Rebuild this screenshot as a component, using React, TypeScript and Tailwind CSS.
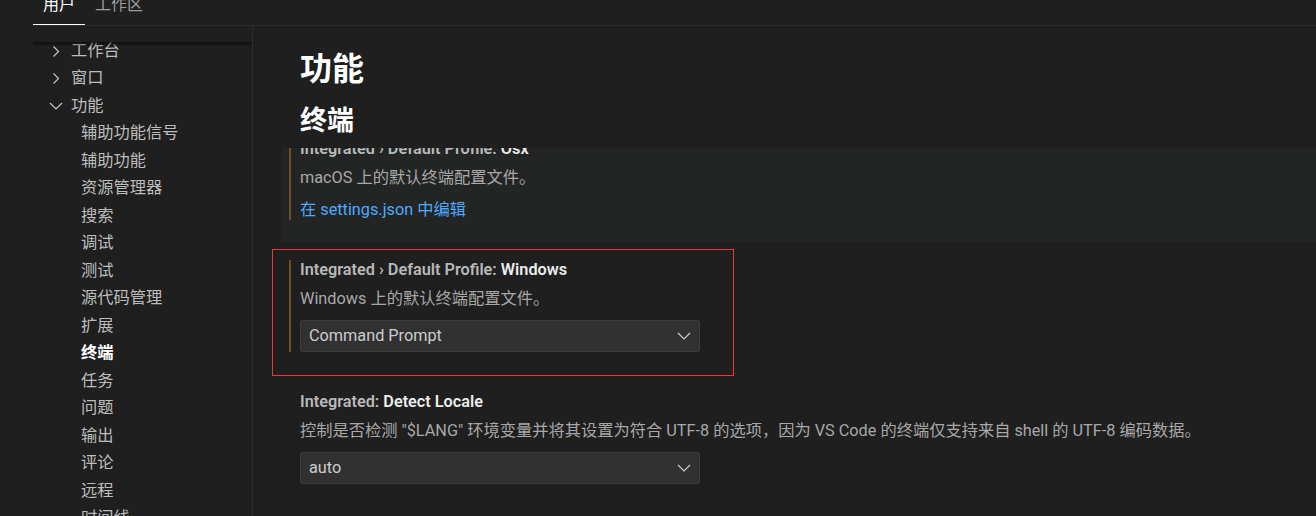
import React from 'react';

type TocItem = {
  label: string;
  level: 0 | 1;
  expanded?: boolean;
  active?: boolean;
};

const tocItems: TocItem[] = [
  { label: '工作台', level: 0, expanded: false },
  { label: '窗口', level: 0, expanded: false },
  { label: '功能', level: 0, expanded: true },
  { label: '辅助功能信号', level: 1 },
  { label: '辅助功能', level: 1 },
  { label: '资源管理器', level: 1 },
  { label: '搜索', level: 1 },
  { label: '调试', level: 1 },
  { label: '测试', level: 1 },
  { label: '源代码管理', level: 1 },
  { label: '扩展', level: 1 },
  { label: '终端', level: 1, active: true },
  { label: '任务', level: 1 },
  { label: '问题', level: 1 },
  { label: '输出', level: 1 },
  { label: '评论', level: 1 },
  { label: '远程', level: 1 },
  { label: '时间线', level: 1 },
];

const ChevronRight = () => (
  <svg width="16" height="16" viewBox="0 0 16 16" fill="none">
    <path d="M5.5 3.5L10.5 8.5L5.5 13.5" stroke="#c5c5c5" strokeWidth="1.2" />
  </svg>
);

const ChevronDown = ({ color = '#c5c5c5' }: { color?: string }) => (
  <svg width="16" height="16" viewBox="0 0 16 16" fill="none">
    <path d="M2 5L8 11L14 5" stroke={color} strokeWidth="1.2" />
  </svg>
);

// Settings tree on the left
const Toc = () => (
  <div className="relative w-[220px] flex-none border-r border-[#2b2b2b] pt-[11px] overflow-hidden">
    {/* scroll shadow */}
    <div className="absolute left-0 right-0 top-[16px] h-[5px] bg-gradient-to-b from-black/50 to-transparent" />
    {tocItems.map((item) => (
      <div
        key={item.label}
        className={
          'flex items-center h-[27.5px] text-[16.25px] ' +
          (item.level === 0 ? 'pl-[15px]' : 'pl-[48px]')
        }
      >
        {item.level === 0 && (
          <span className="flex w-4 h-4 mr-[7px]">
            {item.expanded ? <ChevronDown /> : <ChevronRight />}
          </span>
        )}
        <span
          className={
            item.active ? 'text-white font-semibold' : 'text-[#bdbdbd]'
          }
        >
          {item.label}
        </span>
      </div>
    ))}
  </div>
);

const Select = ({ value }: { value: string }) => (
  <div className="flex items-center justify-between w-[400px] h-[32px] bg-[#313131] border border-[#3c3c3c] rounded-[2px] pl-[8px] pr-[7px]">
    <span className="text-[16.25px] text-[#cccccc]">{value}</span>
    <ChevronDown color="#cccccc" />
  </div>
);

type SettingProps = {
  category: string;
  name: string;
  modified?: boolean;
  hovered?: boolean;
  outlined?: boolean;
  children: React.ReactNode;
};

const SettingItem = ({ category, name, modified, hovered, outlined, children }: SettingProps) => (
  <div className={'relative pl-[7px] pt-[18px] pb-[22px] ' + (hovered ? 'bg-[#232524]' : '')}>
    {outlined && (
      <div className="absolute left-[-10px] top-[7px] w-[462px] h-[127px] border border-[#e8383a]" />
    )}
    <div
      className={
        'pl-[9px] border-l-2 ' + (modified ? 'border-[#6e5221]' : 'border-transparent')
      }
    >
      <div className="h-[18px] leading-[20px] text-[16.25px] font-semibold whitespace-nowrap">
        <span className="text-[#b9b9b9]">{category}</span>{' '}
        <span className="text-[#ececec]">{name}</span>
      </div>
      {children}
    </div>
  </div>
);

const Description = ({ text }: { text: string }) => (
  <div className="mt-[11px] h-[20px] leading-[20px] text-[16.25px] text-[#a8a8a8] whitespace-nowrap">
    {text}
  </div>
);

export default function App() {
  return (
    <div className="w-[1316px] h-[516px] bg-[#1f1f1f] overflow-hidden flex flex-col pl-[33px] font-['Roboto','Noto_Sans_CJK_SC',sans-serif]">
      {/* scope tabs */}
      <div className="flex h-[26px] flex-none border-b border-[#2b2b2b]">
        <div className="px-[10px] h-[25px] border-b border-white">
          <div className="-mt-[3px] leading-[16px] text-[16px] text-white">用户</div>
        </div>
        <div className="px-[10px] h-[25px]">
          <div className="-mt-[3px] leading-[16px] text-[16px] text-[#9d9d9d]">工作区</div>
        </div>
      </div>

      <div className="flex flex-1 min-h-0">
        <Toc />

        <div className="flex flex-col flex-1 min-w-0">
          {/* sticky group header */}
          <div className="flex-none h-[122px] pt-[23px] pl-[47px] text-white font-bold">
            <div className="text-[32px] leading-[40px]">功能</div>
            <div className="mt-[15px] text-[27px] leading-[34px]">终端</div>
          </div>

          {/* scrolled settings list */}
          <div className="flex-1 min-h-0 overflow-hidden pl-[29px]">
            <div className="-mt-[27px]">
              <SettingItem category="Integrated › Default Profile:" name="Osx" modified hovered>
                <Description text="macOS 上的默认终端配置文件。" />
                <div className="mt-[12px] h-[20px] leading-[20px] text-[16.25px] text-[#4daafc]">
                  在 settings.json 中编辑
                </div>
              </SettingItem>

              <div className="w-[452px]">
                <SettingItem category="Integrated › Default Profile:" name="Windows" modified outlined>
                  <Description text="Windows 上的默认终端配置文件。" />
                  <div className="mt-[11px]">
                    <Select value="Command Prompt" />
                  </div>
                </SettingItem>
              </div>

              <SettingItem category="Integrated:" name="Detect Locale">
                <Description text='控制是否检测 "$LANG" 环境变量并将其设置为符合 UTF-8 的选项，因为 VS Code 的终端仅支持来自 shell 的 UTF-8 编码数据。' />
                <div className="mt-[11px]">
                  <Select value="auto" />
                </div>
              </SettingItem>
            </div>
          </div>
        </div>
      </div>
    </div>
  );
}
